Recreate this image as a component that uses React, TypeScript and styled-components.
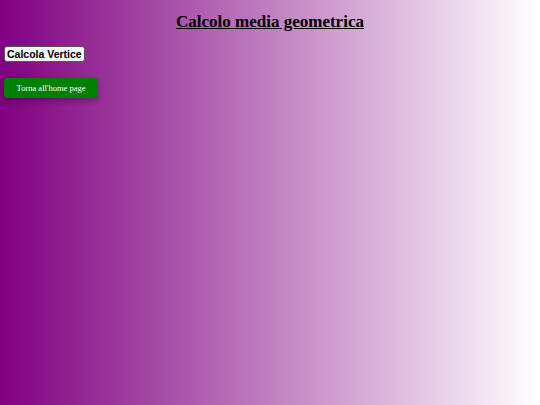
import styled, { createGlobalStyle } from "styled-components";

const GlobalStyle = createGlobalStyle`
  html, body {
    margin: 0;
    padding: 0;
    height: 100%;
  }
  body {
    background: linear-gradient(to right, #800080, #ffffff);
    font-family: "Liberation Serif", "Times New Roman", serif;
  }
  #root {
    min-height: 100%;
  }
`;

const Page = styled.div`
  padding: 4px;
  min-height: 405px;
  box-sizing: border-box;
`;

const Title = styled.h1`
  margin: 8px 0 12px;
  text-align: center;
  font-size: 17px;
  font-weight: bold;
  text-decoration: underline;
  color: #000;
`;

const CalcButton = styled.button`
  font-family: "Liberation Sans", Arial, sans-serif;
  font-size: 10.5px;
  font-weight: bold;
  color: #000;
  background: #f4f4f4;
  border: 1px solid #555;
  border-radius: 3px;
  padding: 1px 2px;
  cursor: pointer;
`;

const Actions = styled.div`
  margin-top: 15px;
`;

const HomeButton = styled.button`
  width: 94px;
  height: 20px;
  font-family: "Liberation Serif", "Times New Roman", serif;
  font-size: 8.5px;
  color: #fff;
  background: #008000;
  border: none;
  border-radius: 3px;
  box-shadow: 0 3px 6px rgba(0, 0, 0, 0.3);
  cursor: pointer;
`;

export default function App() {
  return (
    <Page>
      <GlobalStyle />
      <Title>Calcolo media geometrica</Title>
      <CalcButton>Calcola Vertice</CalcButton>
      <Actions>
        <HomeButton>Torna all'home page</HomeButton>
      </Actions>
    </Page>
  );
}
